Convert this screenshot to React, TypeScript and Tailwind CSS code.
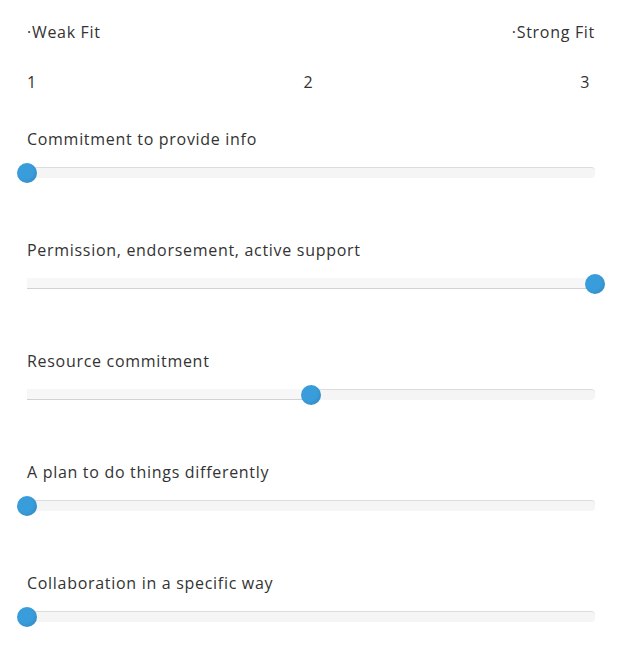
import React from "react";

const items = [
  { label: "Commitment to provide info", value: 1 },
  { label: "Permission, endorsement, active support", value: 3 },
  { label: "Resource commitment", value: 2 },
  { label: "A plan to do things differently", value: 1 },
  { label: "Collaboration in a specific way", value: 1 },
];

function Slider({ value }: { value: number }) {
  const pct = ((value - 1) / 2) * 100;
  return (
    <div className="relative h-[11px] rounded-r-[4px] border-t border-[#dcdcdc] bg-[#f5f5f5]">
      <div
        className="absolute left-0 top-[-1px] h-[11px] border-b border-[#d2d2d2] bg-[#f7f7f7]"
        style={{ width: `${pct}%` }}
      />
      <div
        className="absolute top-[-5px] h-[20px] w-[20px] rounded-full bg-[#3a9ddb] shadow-[inset_-2px_-2px_3px_rgba(0,0,0,0.08)]"
        style={{ left: `calc(${pct}% - 10px)` }}
      />
    </div>
  );
}

export default function App() {
  return (
    <div
      className="bg-white pl-[27px] pr-[30px] pt-[20px] pb-[30px] text-[16px] leading-[24px] tracking-[0.7px] text-[#333]"
      style={{ fontFamily: '"Open Sans", sans-serif' }}
    >
      <div className="flex justify-between">
        <span>·Weak Fit</span>
        <span>·Strong Fit</span>
      </div>
      <div className="mt-[26px] flex justify-between pr-[5px]">
        <span>1</span>
        <span>2</span>
        <span>3</span>
      </div>
      <div className="mt-[33px] flex flex-col gap-[60px]">
        {items.map((it) => (
          <div key={it.label} className="flex flex-col gap-[16px]">
            <span>{it.label}</span>
            <Slider value={it.value} />
          </div>
        ))}
      </div>
    </div>
  );
}
